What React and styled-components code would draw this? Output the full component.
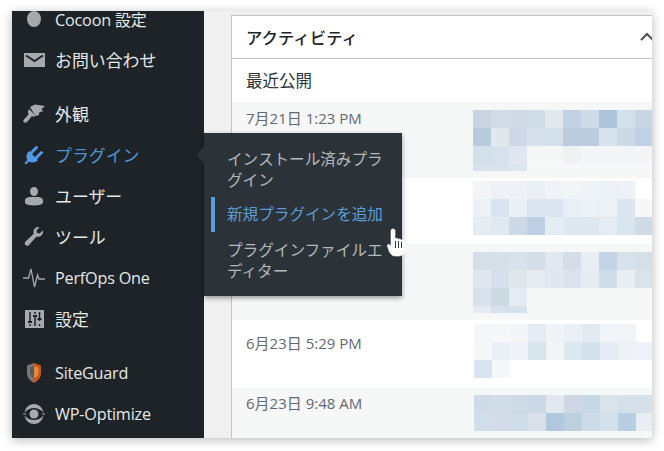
import React from "react";
import styled, { createGlobalStyle } from "styled-components";

const GlobalStyle = createGlobalStyle`
  html, body {
    margin: 0;
    padding: 0;
    background: #fff;
  }
  body {
    font-family: "Open Sans", "Noto Sans CJK JP", sans-serif;
  }
`;

const Page = styled.div`
  width: 664px;
  height: 451px;
  padding: 11px 12px 13px;
  box-sizing: border-box;
  overflow: hidden;
`;

const Frame = styled.div`
  display: flex;
  height: 427px;
  background: #f0f0f1;
  box-shadow: 0 2px 10px rgba(0, 0, 0, 0.28);
`;

const Sidebar = styled.nav`
  flex: 0 0 192px;
  background: #1d2327;
`;

const MenuList = styled.ul`
  list-style: none;
  margin: -13px 0 0;
  padding: 0;
`;

const MenuItem = styled.li`
  position: relative;
  display: flex;
  align-items: center;
  gap: 10px;
  height: 41px;
  padding-left: 11px;
  margin-top: ${(p) => (p.$gap ? "13px" : "0")};
  color: ${(p) => (p.$active ? "#4f94d4" : "#e6e7e8")};
  font-size: ${(p) => (p.$cjk ? "16.9px" : "16.2px")};
  letter-spacing: ${(p) => (p.$cjk ? "0" : "-0.2px")};
`;

const CjkPart = styled.span`
  font-size: 16px;
`;

const IconBox = styled.span`
  flex: 0 0 22px;
  width: 22px;
  min-width: 0;
  height: 22px;
  display: flex;
  align-items: center;
  justify-content: center;
  color: ${(p) => (p.$active ? "#4f9be8" : "#a7aaad")};
  svg {
    display: block;
    flex: none;
  }
`;

const Flyout = styled.div`
  position: absolute;
  left: 100%;
  top: -1px;
  width: 198px;
  height: 163px;
  box-sizing: border-box;
  padding: 16px 16px 0 23px;
  background: #2c3338;
  box-shadow: 0 2px 5px rgba(0, 0, 0, 0.4);
  z-index: 5;
  letter-spacing: 0;
  &::before {
    content: "";
    position: absolute;
    left: -8px;
    top: 14px;
    border-style: solid;
    border-width: 8px 8px 8px 0;
    border-color: transparent #2c3338 transparent transparent;
  }
`;

const FlyoutLink = styled.div`
  position: relative;
  font-size: 15.6px;
  line-height: 21px;
  margin-bottom: ${(p) => (p.$current ? "15px" : "13px")};
  color: ${(p) => (p.$current ? "#5b9dd9" : "#b4b9be")};
  &::before {
    content: "";
    display: ${(p) => (p.$current ? "block" : "none")};
    position: absolute;
    left: -16px;
    top: -7px;
    width: 4px;
    height: 35px;
    background: #5b9dd9;
  }
`;

const Cursor = styled.svg`
  position: absolute;
  left: 183px;
  top: 95px;
`;

const Main = styled.main`
  flex: 1;
  min-width: 0;
  padding: 4px 0 0 27px;
  overflow: hidden;
`;

const Card = styled.section`
  background: #fff;
  border: 1px solid #c3c4c7;
  border-right: none;
  border-bottom: none;
  height: 423px;
  overflow: hidden;
`;

const CardHeader = styled.header`
  display: flex;
  align-items: center;
  justify-content: space-between;
  height: 42px;
  padding-left: 14px;
  border-bottom: 1px solid #c3c4c7;
  font-size: 16.4px;
  font-weight: 500;
  color: #1d2327;
`;

const Chevron = styled.svg`
  margin-right: -2px;
`;

const SectionTitle = styled.h3`
  margin: 0;
  height: 43px;
  box-sizing: border-box;
  padding: 0 0 2px 14px;
  display: flex;
  align-items: center;
  font-size: 16.5px;
  font-weight: 400;
  color: #2c3338;
`;

const ActivityRow = styled.div`
  display: grid;
  grid-template-columns: 227px 1fr;
  height: ${(p) => p.$height}px;
  padding-left: 14px;
  background: ${(p) => (p.$shaded ? "#f6f7f7" : "#fff")};
`;

const DateText = styled.div`
  padding-top: ${(p) => p.$top}px;
  font-size: 15px;
  line-height: 20px;
  color: #646970;
`;

const Mosaic = styled.div`
  padding-top: ${(p) => p.$top}px;
  margin-left: ${(p) => p.$shift || 0}px;
`;

const MosaicRow = styled.div`
  display: flex;
  height: ${(p) => p.$height || 18}px;
`;

const MosaicCell = styled.span`
  flex: 0 0 18px;
  height: 100%;
  background: ${(p) => p.$color || "transparent"};
`;

const menu = [
  { label: "Cocoon", suffix: "設定", icon: "dot" },
  { label: "お問い合わせ", icon: "mail", cjk: true },
  { label: "外観", icon: "brush", gap: true, cjk: true },
  { label: "プラグイン", icon: "plug", active: true, cjk: true },
  { label: "ユーザー", icon: "user", cjk: true },
  { label: "ツール", icon: "wrench", cjk: true },
  { label: "PerfOps One", icon: "pulse" },
  { label: "設定", icon: "sliders", cjk: true },
  { label: "SiteGuard", icon: "shield", gap: true },
  { label: "WP-Optimize", icon: "optimize" },
];

const rows = [
  {
    date: "7月21日 1:23 PM", height: 76, shaded: true, dateTop: 6, top: 8,
    cells: [
      ["c8d4e0", "d3dbe6", "cfdae6", "d0dce6", "e2e8ee", "c2d2e2", "cfdce8", "adc4da", "d2e0ea", "c8d6e4"],
      ["b8cbdf", "e0e8ee", "ced8e6", "d5e0ea", "d3dfe9", "bccde0", "bccde0", "d7e2ec", "ccdae6", "c0d2e4"],
      ["d3dfe9", "d6e1ec", "e1e7f0", "f5f6f6", "f5f6f6", "eff2f3", "f4f5f6", "f4f5f6", "f4f5f6", "f4f5f6"],
      ["d8e2ec", "d8e2ec", "dde5ef"],
    ],
  },
  {
    date: "", height: 66, top: 3,
    cells: [
      ["f3f5f7", "eef2f6", "eef2f6", "ebf0f5", "f0f3f7", "f2f5f8", "eef3f7", "ecf1f6", "eef2f6", "ffffff"],
      ["ecf1f6", "d8e4ee", "ebf0f6", "dbe6f0", "dce6f1", "e8eff5", "edf2f6", "ecf1f6", "dbe6f0", "f5f7f8"],
      ["e5ecf2", "e0e8f0", "ccd9e6", "bdd0e4", "e4ecf4", "dfe8f0", "dce7f0", "e6ecf3", "d9e5ef", "cfdce8"],
    ],
  },
  {
    date: "", height: 76, shaded: true, top: 8,
    cells: [
      ["d5dfe7", "d6e0e9", "d9e2ea", "d3dde6", "e1e8ef", "d5dde8", "e8eef4", "c2d4e5", "d8e2ec", "d5dfe8"],
      ["dfe6ee", "d6e0ea", "dfe6ec", "e6ecf2", "e0e7ee", "dae3ed", "e6ecf2", "d0dce7", "e8eef3", "d9e3ec"],
      ["d6e1ec", "ccd9e4", "e4ebf2"],
      ["e6ebf3", "d6e1ec", "d6e1ec"],
    ],
  },
  {
    date: "6月23日 5:29 PM", height: 68, dateTop: 13, top: 4, shift: 1,
    cells: [
      ["f5f6f8", "f5f7f8", "f3f5f7", "e4ebf3", "f1f4f7", "ebf0f6", "e2ebf4", "f1f4f8", "f2f5f8", "ffffff"],
      ["f5f7f8", "ebf0f7", "eff2f6", "d8e4ec", "f2f5f8", "dce8f0", "d2e1ec", "e3ecf4", "eef2f6", "eff3f7"],
      ["d8e4ef", "f6f7f8"],
    ],
  },
  {
    date: "6月23日 9:48 AM", height: 50, shaded: true, dateTop: 5, top: 7, shift: 1,
    cells: [
      ["cfdce8", "d0dce8", "cedae6", "cbd8e5", "e3e8f0", "cfd7e4", "c7d8e6", "d9e4ec", "d5e0ea", "d5e0ea"],
      ["d0dee9", "d2dbe7", "cfdde8", "d9e0ea", "b0c8de", "bdd0df", "ccdbe7", "d5e1ea", "b8cfe2", "e8eef2"],
    ],
  },
];

const MenuIcon = ({ name }) => {
  switch (name) {
    case "dot":
      return (
        <svg width="18" height="18" viewBox="0 0 18 18">
          <ellipse cx="9" cy="9" rx="7" ry="8" fill="currentColor" />
        </svg>
      );
    case "mail":
      return (
        <svg width="21" height="16" viewBox="0 0 21 16">
          <path d="M0 1h21v14H0z" fill="currentColor" />
          <path d="M2 3.500L10.500 9 19 3.500" fill="none" stroke="#1d2327" strokeWidth="2" />
        </svg>
      );
    case "brush":
      return (
        <svg width="24" height="20" viewBox="0 0 24 20">
          <path d="M8 3l5-2.500 10 1.500-3.500 3 1.500 2.500-3.500.5-.5 3-3.500 1z" fill="currentColor" />
          <path d="M7 5l6.500 6.500-2 1.500-1.500-1-5 6c-1.500 1.500-4.500.5-3.500-2l5-5.500-.5-3z" fill="currentColor" />
        </svg>
      );
    case "plug":
      return (
        <svg width="20" height="20" viewBox="0 0 20 20">
          <path d="M5 6l9 9c-3 3-6.500 3-9 1.500L2 19.500 .5 18l3-3C2 12.500 2 9 5 6z" fill="currentColor" />
          <path d="M7.500 7.500l5-5M12.500 12.500l5-5" stroke="currentColor" strokeWidth="3" strokeLinecap="round" />
        </svg>
      );
    case "user":
      return (
        <svg width="20" height="20" viewBox="0 0 20 20">
          <ellipse cx="10" cy="5.500" rx="4" ry="4.500" fill="currentColor" />
          <path d="M1 17v-2.500c0-2 2-3.500 5-3.500h8c3 0 5 1.500 5 3.500V17c-1.500 1.800-5 2.500-9 2.500S2.500 18.800 1 17z" fill="currentColor" />
        </svg>
      );
    case "wrench":
      return (
        <svg width="20" height="20" viewBox="0 0 20 20">
          <path d="M19 3.500l-3.500 3-2.500-.5-.5-2.500L15.500 0C12.500-.5 9.500 1.500 9.500 5c0 .8.100 1.300.3 1.800L1.500 14.500c-1 1-1 2.500 0 3.500s2.500 1 3.500-.1l7.500-8.400c3.500 1.200 7.200-1.700 6.500-6z" fill="currentColor" />
        </svg>
      );
    case "pulse":
      return (
        <svg width="24" height="22" viewBox="0 0 24 22">
          <path d="M1 11h5.500L9 2l3.500 18 3-12 1.500 4h6" fill="none" stroke="currentColor" strokeWidth="1.300" />
        </svg>
      );
    case "sliders":
      return (
        <svg width="19" height="18" viewBox="0 0 19 18">
          <path d="M0 0h19v18H0z" fill="currentColor" />
          <path d="M5 2v9M5 14v2M10 2v2M10 7v9M14.500 2v9M14.500 14v2" stroke="#1d2327" strokeWidth="1.500" />
          <path d="M3 11h4v2H3zM8 5h4v2H8zM12.500 8h4v2h-4z" fill="#1d2327" />
        </svg>
      );
    case "shield":
      return (
        <svg width="14" height="20" viewBox="0 0 14 20">
          <path d="M7 0l7 2.500v8c0 3.500-2.500 7-7 9.500z" fill="#c8551c" />
          <path d="M7 0L0 2.500v8C0 14 2.500 17.500 7 20z" fill="#77777a" />
          <path d="M7 3l4.500 1.500v5c0 2.500-2 4.500-4.500 6z" fill="#e58a3c" />
          <path d="M7 3L3 4.500v5C3 12 4.500 14 7 15.500z" fill="#5a5a5d" />
        </svg>
      );
    default:
      return (
        <svg width="24" height="24" viewBox="0 0 24 24">
          <circle cx="12" cy="12" r="4.500" fill="currentColor" />
          <path d="M2.500 10.500C3.500 5.500 7.500 2 12 2s8.500 3.500 9.500 8.500C19 7.500 15.500 6 12 6s-7 1.500-9.500 4.500z" fill="currentColor" />
          <path d="M2.500 13.500C3.500 18.500 7.500 22 12 22s8.500-3.500 9.500-8.500C19 16.500 15.500 18 12 18s-7-1.500-9.500-4.500z" fill="currentColor" />
          <path d="M1 12h3M20 12h3" stroke="currentColor" strokeWidth="1.200" />
        </svg>
      );
  }
};

const App = () => {
  return (
    <Page>
      <GlobalStyle />
      <Frame>
        <Sidebar>
          <MenuList>
            {menu.map((item) => (
              <MenuItem key={item.label} $gap={item.gap} $active={item.active} $cjk={item.cjk}>
                <IconBox $active={item.active}>
                  <MenuIcon name={item.icon} />
                </IconBox>
                <span>
                  {item.label}
                  {item.suffix && <CjkPart> {item.suffix}</CjkPart>}
                </span>
                {item.active && (
                  <Flyout>
                    <FlyoutLink>インストール済みプラグイン</FlyoutLink>
                    <FlyoutLink $current>新規プラグインを追加</FlyoutLink>
                    <FlyoutLink>プラグインファイルエディター</FlyoutLink>
                    <Cursor width="20" height="30" viewBox="0 0 20 30">
                      <path
                        d="M4 2.500c0-2 4-2 4 0V11c1-1.200 3-1 3 .5 1-1 3-.8 3 .8 1-.8 4-.4 4 1.200V20c0 4-2 8-6 8H8c-3 0-4-2-5.500-4L.5 18.500c-.8-2 1.500-3 3-1L4 19z"
                        fill="#fff"
                        stroke="#fff"
                        strokeWidth="0.600"
                      />
                      <path d="M8.500 13v7M11.500 13v7M14.500 14v6" stroke="#1d2327" strokeWidth="0.900" />
                    </Cursor>
                  </Flyout>
                )}
              </MenuItem>
            ))}
          </MenuList>
        </Sidebar>
        <Main>
          <Card>
            <CardHeader>
              アクティビティ
              <Chevron width="14" height="10" viewBox="0 0 14 10">
                <path d="M1 8l6-6 6 6" fill="none" stroke="#50575e" strokeWidth="2.200" />
              </Chevron>
            </CardHeader>
            <SectionTitle>最近公開</SectionTitle>
            {rows.map((row, i) => (
              <ActivityRow key={i} $height={row.height} $shaded={row.shaded}>
                <DateText $top={row.dateTop}>{row.date}</DateText>
                <Mosaic $top={row.top} $shift={row.shift}>
                  {row.cells.map((line, j) => (
                    <MosaicRow key={j} $height={j === 3 ? 7 : 18}>
                      {line.map((c, k) => (
                        <MosaicCell key={k} $color={`#${c}`} />
                      ))}
                    </MosaicRow>
                  ))}
                </Mosaic>
              </ActivityRow>
            ))}
          </Card>
        </Main>
      </Frame>
    </Page>
  );
};

export default App;
